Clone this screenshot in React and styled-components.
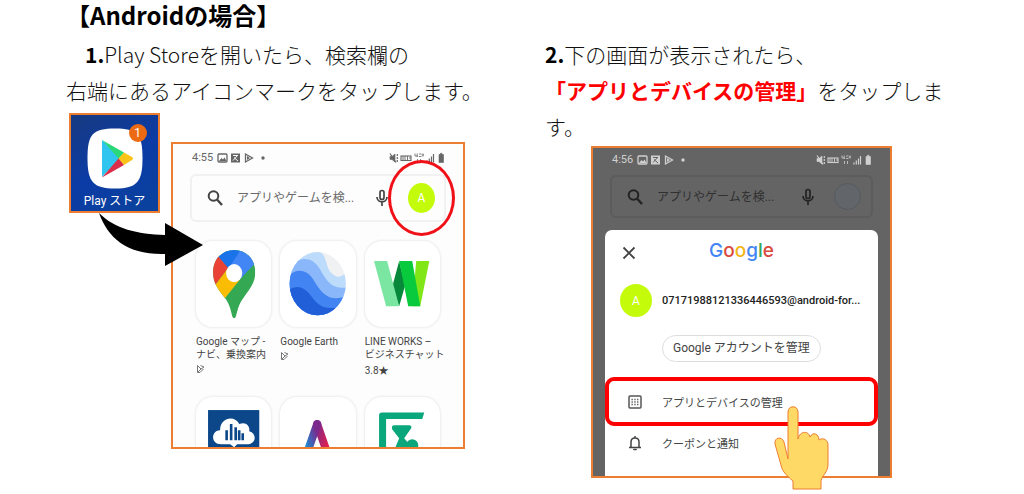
import React, { useState } from "react";
import styled, { createGlobalStyle } from "styled-components";

const GlobalStyle = createGlobalStyle`
  * {
    box-sizing: border-box;
  }
  body {
    margin: 0;
    background: #fff;
    color: #111;
    font-family: "Noto Sans CJK JP", sans-serif;
  }
  button, input {
    font-family: Roboto, "Noto Sans CJK JP", sans-serif;
    border: none;
    background: none;
    padding: 0;
    margin: 0;
  }
`;

const SearchIcon = () => (
  <svg width="16" height="18" viewBox="0 0 16 18" fill="none" stroke="currentColor" strokeWidth="2">
    <circle cx="6.5" cy="7" r="4.8" />
    <path d="M10 10.5 L15 16" strokeWidth="2.3" />
  </svg>
);

const MicIcon = () => (
  <svg width="12" height="18" viewBox="0 0 12 18" fill="none" stroke="currentColor" strokeWidth="1.7">
    <rect x="4" y="1.5" width="4" height="9" rx="2" />
    <path d="M1 8 C1 14.5 11 14.5 11 8 M6 13 V17" />
  </svg>
);

const StatusLeftIcons = () => (
  <svg width="50" height="12" viewBox="0 0 50 12">
    <rect x="1" y="2" width="9" height="8" rx="1" fill="none" stroke="currentColor" strokeWidth="1.3" />
    <path d="M2 9 L4.5 6 L6 7.5 L7.5 5.5 L9.5 9Z" fill="currentColor" />
    <rect x="14" y="1.5" width="9" height="9" fill="currentColor" />
    <path d="M16 3.5 H21 M16 8.5 L20.5 3.5 M17 5.5 L21 9" stroke="var(--screen)" strokeWidth="1" />
    <path d="M28.5 2 V10 L35.5 6Z" fill="none" stroke="currentColor" strokeWidth="1.3" />
    <path d="M30 4 L33 6 L30 8Z" fill="currentColor" />
    <circle cx="46" cy="6" r="1.7" fill="currentColor" />
  </svg>
);

const StatusRightIcons = () => (
  <svg width="56" height="12" viewBox="0 0 56 12" fill="none" stroke="currentColor">
    <path d="M1 4.5 H3 L6 2 V10 L3 7.5 H1Z" fill="currentColor" strokeWidth="0.6" />
    <path d="M1 1.5 L7 10.5 M8.3 2 V4 M8.3 5 V7 M8.3 8 V10" strokeWidth="1.2" />
    <rect x="12" y="4" width="10" height="4.5" strokeWidth="1.1" />
    <path d="M14 4 V8 M16 4 V8 M18.5 4 V8 M20 6 H22" strokeWidth="0.9" />
    <path d="M26 1.5 V4 H29 M28.2 1.5 V5 M30 2 H32.5 M30 4.5 H32.5 M34 1.5 V4.5 M32.8 3 H35 M28.5 7 V10 M31.5 7 V10" strokeWidth="0.8" />
    <path d="M38 10.5 V8.5 M40.3 10.5 V6.5 M42.5 10.5 V4.5 M44.5 10.5 V2" strokeWidth="1.2" />
    <path d="M50 2.5 H51.5 V1.3 H53 V2.5 H54.5 V10.5 H50Z" fill="currentColor" strokeWidth="0.6" />
  </svg>
);

const PlayLogo = () => (
  <svg width="56" height="61" viewBox="0 0 56 61">
    <path d="M28 0.5 C50 0.5 55.5 6 55.5 30 C55.5 54 50 60.5 28 60.5 C6 60.5 0.5 54 0.5 30 C0.5 6 6 0.5 28 0.5Z" fill="#fff" />
    <path d="M15 12 V49 L33 30.5Z" fill="#30c5ee" />
    <path d="M15 12 L37 24.5 L32 31Z" fill="#2bd879" />
    <path d="M15 49.5 L37 37 L32 30Z" fill="#d92d49" />
    <path d="M37 24.5 L45 29 Q47 30.5 45 32 L37 37 L31.5 30.5Z" fill="#fcc419" />
  </svg>
);

const PlayMark = () => (
  <svg width="9" height="10" viewBox="0 0 9 10" fill="none" stroke="#777" strokeWidth="1">
    <path d="M1.5 1.5 V8.5 H4 L7.5 5 M1.5 1.5 L5 5 L2 8 M4.5 1.5 L8 3 L5 5" />
  </svg>
);

const MapsLogo = () => (
  <svg viewBox="0 0 75 86">
    <clipPath id="pin">
      <path d="M38 77 C35 77 36 66 29 57 C22 48 17 42 17 31 C17 18 26 9 38 9 C50 9 59 18 59 31 C59 42 53 48 47 57 C40 66 41 77 38 77Z" />
    </clipPath>
    <g clipPath="url(#pin)">
      <rect width="75" height="86" fill="#34a853" />
      <path d="M20 17 L38 4 L46 8 L32 29Z" fill="#1a73e8" />
      <path d="M45 8 L32 28 L42 40 L60 21 V5Z" fill="#4285f4" />
      <path d="M10 14 H21 L32 27 L19 44 L10 42Z" fill="#ea4335" />
      <path d="M19 44 L32 27 L44 38 L28 58 L18 52Z" fill="#fbbc04" />
    </g>
    <ellipse cx="38" cy="32" rx="8" ry="9" fill="#fff" />
  </svg>
);

const EarthLogo = () => (
  <svg viewBox="0 0 75 86">
    <clipPath id="globe">
      <ellipse cx="37.5" cy="42.5" rx="28" ry="31.5" />
    </clipPath>
    <g clipPath="url(#globe)">
      <rect width="75" height="86" fill="#f0f1f3" />
      <path d="M0 10 H35 C49 10 43 28 54 34 C60 38 64 34 67 29 V86 H0Z" fill="#bddcfc" />
      <path d="M8 30 C16 14 32 15 39 27 C46 38 50 49 67 46 V86 H8Z" fill="#8ab7f9" />
      <path d="M5 40 C12 27 25 26 33 38 C42 53 49 61 66 55 V86 H5Z" fill="#4384f3" />
      <path d="M8 49 C18 42 26 47 32 56 C39 66 46 68 59 66 V86 H8Z" fill="#205fd8" />
    </g>
  </svg>
);

const WorksLogo = () => (
  <svg viewBox="0 0 75 86">
    <path d="M51 20 H64 L55 65 H47Z" fill="#81e617" />
    <path d="M34 20 L40 44 L34 65 L27 46Z" fill="#07883b" />
    <path d="M9 20 H22 L34 65 H21Z" fill="#7be6a2" />
    <path d="M34 20 H47 L55 65 H43Z" fill="#08ca3c" />
  </svg>
);

const CloudLogo = () => (
  <svg viewBox="0 0 75 86">
    <rect x="12" y="13" width="51" height="60" fill="#0b4789" />
    <path d="M25 47 C14 47 15 33 24 33 C24 20 39 18 43 27 C50 24 54 29 53 34 C61 36 60 47 51 47 H41 L38 50 L34 47Z" fill="#fff" />
    <path d="M30.5 43 V33 M35 43 V27 M39.5 43 V30 M43 43 V33 M46.5 43 V36" stroke="#0b4789" strokeWidth="2.6" />
  </svg>
);

const ALogo = () => (
  <svg viewBox="0 0 75 86">
    <defs>
      <linearGradient id="aLeft" x1="0" y1="1" x2="1" y2="0">
        <stop offset="0.35" stopColor="#168fd8" />
        <stop offset="0.9" stopColor="#7b2a8c" />
      </linearGradient>
      <linearGradient id="aRight" x1="0" y1="0" x2="1" y2="1">
        <stop offset="0" stopColor="#7b2a8c" />
        <stop offset="0.6" stopColor="#e01f4f" />
      </linearGradient>
    </defs>
    <path d="M37 27 L52 70" stroke="url(#aRight)" strokeWidth="8" strokeLinecap="round" />
    <path d="M37 27 L22 70" stroke="url(#aLeft)" strokeWidth="8" strokeLinecap="round" />
  </svg>
);

const GreenLogo = () => (
  <svg viewBox="0 0 75 86">
    <path d="M14 80 V18 Q14 15.5 17 15.5 H59 L57 22 H21 V80Z" fill="#0aa67c" />
    <path d="M29 28 H44 Q47 28 46 31 L39 41 L45 48 L38 58 H27 L34 41 L27 32 Q26 28 29 28Z" fill="#0aa67c" />
    <circle cx="47" cy="48" r="6" fill="#0aa67c" />
  </svg>
);

const apps = [
  { id: 1, Logo: MapsLogo, lines: ["Google マップ -", "ナビ、乗換案内"] },
  { id: 2, Logo: EarthLogo, lines: ["Google Earth"] },
  { id: 3, Logo: WorksLogo, lines: ["LINE WORKS –", "ビジネスチャット"], rating: "3.8★" },
  { id: 4, Logo: CloudLogo, lines: [] },
  { id: 5, Logo: ALogo, lines: [] },
  { id: 6, Logo: GreenLogo, lines: [] },
];

const google = [
  ["G", "#4285f4"],
  ["o", "#d9493c"],
  ["o", "#f2b617"],
  ["g", "#4285f4"],
  ["l", "#34a853"],
  ["e", "#d9493c"],
];

function PhoneTop({ time, dim, children }) {
  const [query, setQuery] = useState("");
  return (
    <>
      <StatusBar $dim={dim}>
        <time>{time}</time>
        <StatusLeftIcons />
        <Spacer />
        <StatusRightIcons />
      </StatusBar>
      <SearchBar $dim={dim}>
        <SearchIcon />
        <SearchInput
          type="text"
          aria-label="アプリやゲームを検索"
          placeholder="アプリやゲームを検..."
          value={query}
          $dim={dim}
          onChange={(e) => setQuery(e.target.value)}
        />
        <MicButton type="button" aria-label="音声検索">
          <MicIcon />
        </MicButton>
        {children}
      </SearchBar>
    </>
  );
}

function App() {
  return (
    <Page>
      <GlobalStyle />
      <Heading>【Androidの場合】</Heading>
      <Columns>
        <Step>
          <StepText>
            <Indented>
              <b>1.</b>Play Storeを開いたら、検索欄の
            </Indented>
            <div>右端にあるアイコンマークをタップします。</div>
          </StepText>
          <StoreFigure>
            <HomeTile>
              <IconHolder>
                <PlayLogo />
                <Badge>1</Badge>
              </IconHolder>
              <HomeLabel>Play ストア</HomeLabel>
              <Arrow width="104" height="54" viewBox="0 0 104 54">
                <path d="M0 0 C16 16 38 21 66 22 V10 L104 32 L66 53 V41 C28 42 9 25 0 0Z" />
              </Arrow>
            </HomeTile>
            <StorePhone>
              <PhoneTop time="4:55">
                <AvatarRing>
                  <Avatar type="button" $w={27} $h={30}>A</Avatar>
                </AvatarRing>
              </PhoneTop>
              <AppGrid>
                {apps.map(({ id, Logo, lines, rating }) => (
                  <AppItem key={id}>
                    <AppIcon>
                      <Logo />
                    </AppIcon>
                    {lines.map((line) => (
                      <AppName key={line}>{line}</AppName>
                    ))}
                    {lines.length > 0 && <AppMeta>{rating || <PlayMark />}</AppMeta>}
                  </AppItem>
                ))}
              </AppGrid>
            </StorePhone>
          </StoreFigure>
        </Step>
        <Step>
          <StepText>
            <div>
              <b>2.</b>下の画面が表示されたら、
            </div>
            <div>
              <Red>「アプリとデバイスの管理」</Red>をタップしま
              <br />
              す。
            </div>
          </StepText>
          <AccountPhone>
            <PhoneTop time="4:56" dim>
              <EmptyAvatar />
            </PhoneTop>
            <Sheet>
              <SheetHead>
                <CloseButton type="button" aria-label="閉じる">
                  <svg width="14" height="14" viewBox="0 0 14 14" stroke="#444" strokeWidth="1.8">
                    <path d="M1.5 1.5 L12.5 12.5 M12.5 1.5 L1.5 12.5" />
                  </svg>
                </CloseButton>
                <GoogleLogo>
                  {google.map(([letter, color], i) => (
                    <Letter key={i} $color={color}>{letter}</Letter>
                  ))}
                </GoogleLogo>
              </SheetHead>
              <Account>
                <Avatar type="button" $w={32} $h={33}>A</Avatar>
                <span>07171988121336446593@android-for...</span>
              </Account>
              <ManageButton type="button">Google アカウントを管理</ManageButton>
              <MenuItem type="button" $marked>
                <svg width="14" height="14" viewBox="0 0 14 14" fill="none" stroke="#555">
                  <rect x="1" y="1" width="12" height="12" rx="1" strokeWidth="1.5" />
                  <path d="M3.5 4.5 H11 M3.5 7 H11 M3.5 9.5 H11" strokeWidth="1.3" strokeDasharray="1.3 1.5" />
                </svg>
                アプリとデバイスの管理
              </MenuItem>
              <MenuItem type="button">
                <svg width="14" height="16" viewBox="0 0 14 16" fill="none" stroke="#444" strokeWidth="1.5">
                  <path d="M1 12.5 H13 M3 12.5 V7 C3 1.5 11 1.5 11 7 V12.5 M7 1 V3" />
                  <path d="M5.5 14 H8.5 V15 H5.5Z" fill="#444" strokeWidth="0.5" />
                </svg>
                クーポンと通知
              </MenuItem>
            </Sheet>
            <Hand width="56" height="84" viewBox="0 0 56 84">
              <path
                d="M19 83 V75 C12 69 8 65 7 59 L1 38 C0 31 8 30 10 36 L14 53 V6 C14 -1 24 -1 24 6 V33 C26 24 35 25 36 31 C39 25 45 28 45 34 C49 31 54 34 54 39 V58 C54 67 48 69 47 75 V83Z"
                fill="#ffd966"
                stroke="#ed7d31"
              />
            </Hand>
          </AccountPhone>
        </Step>
      </Columns>
    </Page>
  );
}

export default App;

const Page = styled.main`
  padding: 0 60px 16px 66px;
`;
const Heading = styled.h1`
  margin: 0 0 6px;
  font-size: 24px;
  font-weight: 700;
  line-height: 30px;
  color: #000;
`;
const Columns = styled.div`
  display: grid;
  grid-template-columns: 1fr 1fr;
  gap: 60px;
  align-items: start;
`;
const Step = styled.section`
  min-width: 0;
`;
const StepText = styled.div`
  font-size: 21px;
  font-weight: 300;
  line-height: 36px;

  b {
    font-weight: 700;
    color: #000;
  }
`;
const Indented = styled.div`
  padding-left: 19px;
`;
const Red = styled.strong`
  color: #f00;
  font-weight: 700;
`;
const StoreFigure = styled.div`
  display: flex;
  align-items: flex-start;
  gap: 11px;
  margin: 5px 20px 0 3px;
`;
const HomeTile = styled.div`
  position: relative;
  display: flex;
  flex-direction: column;
  align-items: center;
  width: 91px;
  padding: 13px 0 2px;
  border: 2px solid #ed7d31;
  background: linear-gradient(150deg, #173a80, #0b3ba5 50%, #0a429c);
`;
const IconHolder = styled.div`
  position: relative;
  display: flex;
`;
const Badge = styled.span`
  position: absolute;
  top: -4px;
  right: -4px;
  width: 18px;
  height: 18px;
  border-radius: 50%;
  background: #ec6a12;
  color: #fff;
  font: 12px/18px Roboto, sans-serif;
  text-align: center;
`;
const HomeLabel = styled.span`
  margin-top: 4px;
  color: #fff;
  font: 12px/16px Roboto, "Noto Sans CJK JP", sans-serif;
`;
const Arrow = styled.svg`
  position: absolute;
  z-index: 1;
  top: 98px;
  left: 28px;
`;
const StorePhone = styled.div`
  --screen: #fdfdfd;
  flex: 1;
  min-width: 0;
  height: 307px;
  margin-top: 29px;
  padding: 6px 0 0;
  overflow: hidden;
  border: 2px solid #ed7d31;
  background: #fdfdfd;
`;
const StatusBar = styled.div`
  display: flex;
  align-items: center;
  gap: 4px;
  padding: 0 18px 0 19px;
  color: ${(props) => (props.$dim ? "#d0d0d0" : "#666")};
  font: 11px/16px Roboto, sans-serif;
`;
const Spacer = styled.span`
  flex: 1;
`;
const SearchBar = styled.div`
  display: flex;
  align-items: center;
  height: ${(props) => (props.$dim ? "43px" : "48px")};
  margin: ${(props) => (props.$dim ? "7px" : "8px")} 17px 0;
  padding: 0 ${(props) => (props.$dim ? "10px" : "9px")} 0 15px;
  border: 2px solid ${(props) => (props.$dim ? "#5c5c5c" : "#f1f1f1")};
  border-radius: 6px;
  color: ${(props) => (props.$dim ? "#222" : "#444")};
`;
const SearchInput = styled.input`
  flex: 1;
  min-width: 0;
  margin-left: 14px;
  outline: none;
  color: inherit;
  font-size: 12px;
  line-height: 18px;

  &::placeholder {
    color: ${(props) => (props.$dim ? "#303030" : "#6a6a6a")};
    opacity: 1;
  }
`;
const MicButton = styled.button`
  display: flex;
  margin-right: 20px;
  color: inherit;
`;
const AvatarRing = styled.div`
  position: relative;
  display: flex;

  &::after {
    content: "";
    position: absolute;
    inset: -23px -20px;
    border: 3px solid #f01018;
    border-radius: 50%;
  }
`;
const Avatar = styled.button`
  flex: none;
  width: ${(props) => props.$w}px;
  height: ${(props) => props.$h}px;
  border-radius: 50%;
  background: #c4fb0a;
  color: #fff;
  font-size: 12px;
`;
const EmptyAvatar = styled.span`
  width: 27px;
  height: 27px;
  border: 1px solid #555a60;
  border-radius: 50%;
  background: #62666b;
`;
const AppGrid = styled.div`
  display: grid;
  grid-template-columns: repeat(3, 1fr);
  gap: 20px 9px;
  margin: 19px 23px 0;
`;
const AppItem = styled.div`
  min-width: 0;
  color: #444;
  font: 10px/13px Roboto, "Noto Sans CJK JP", sans-serif;
`;
const AppIcon = styled.div`
  margin-bottom: 8px;
  border-radius: 17px;
  background: #fff;
  box-shadow: 0 0 2px 1px #ececec;
  overflow: hidden;

  svg {
    display: block;
    width: 100%;
  }
`;
const AppName = styled.div`
  white-space: nowrap;
`;
const AppMeta = styled.div`
  margin-top: 3px;
  height: 13px;
`;
const AccountPhone = styled.div`
  --screen: #646464;
  position: relative;
  margin: 2px 72px 0 46px;
  padding: 4px 0 0;
  border: 2px solid #ed7d31;
  background: #646464;
`;
const Sheet = styled.div`
  margin: 12px 12px 0;
  padding-bottom: 17px;
  border-radius: 7px 7px 0 0;
  background: #fff;
`;
const SheetHead = styled.div`
  display: grid;
  grid-template-columns: 1fr auto 1fr;
  align-items: center;
  padding: 8px 17px 0;
`;
const CloseButton = styled.button`
  display: flex;
  padding-top: 4px;
  justify-self: start;
`;
const GoogleLogo = styled.div`
  font: 500 19px/26px Inter, sans-serif;
`;
const Letter = styled.span`
  color: ${(props) => props.$color};
`;
const Account = styled.div`
  display: flex;
  align-items: center;
  gap: 10px;
  padding: 20px 0 0 15px;
  color: #222;
  font: 500 11px/16px Roboto, sans-serif;
  white-space: nowrap;
`;
const ManageButton = styled.button`
  display: block;
  margin: 18px 0 15px 57px;
  padding: 0 10px;
  border: 1px solid #ddd;
  border-radius: 14px;
  color: #444;
  font-size: 12px;
  line-height: 25px;
`;
const MenuItem = styled.button`
  display: flex;
  align-items: center;
  gap: 20px;
  width: 100%;
  height: ${(props) => (props.$marked ? "49px" : "33px")};
  padding-left: ${(props) => (props.$marked ? "19px" : "23px")};
  border: ${(props) => (props.$marked ? "4px solid #f00" : "none")};
  border-radius: 9px;
  color: #444;
  font-size: 11px;
`;
const Hand = styled.svg`
  position: absolute;
  right: 60px;
  bottom: -14px;
`;
